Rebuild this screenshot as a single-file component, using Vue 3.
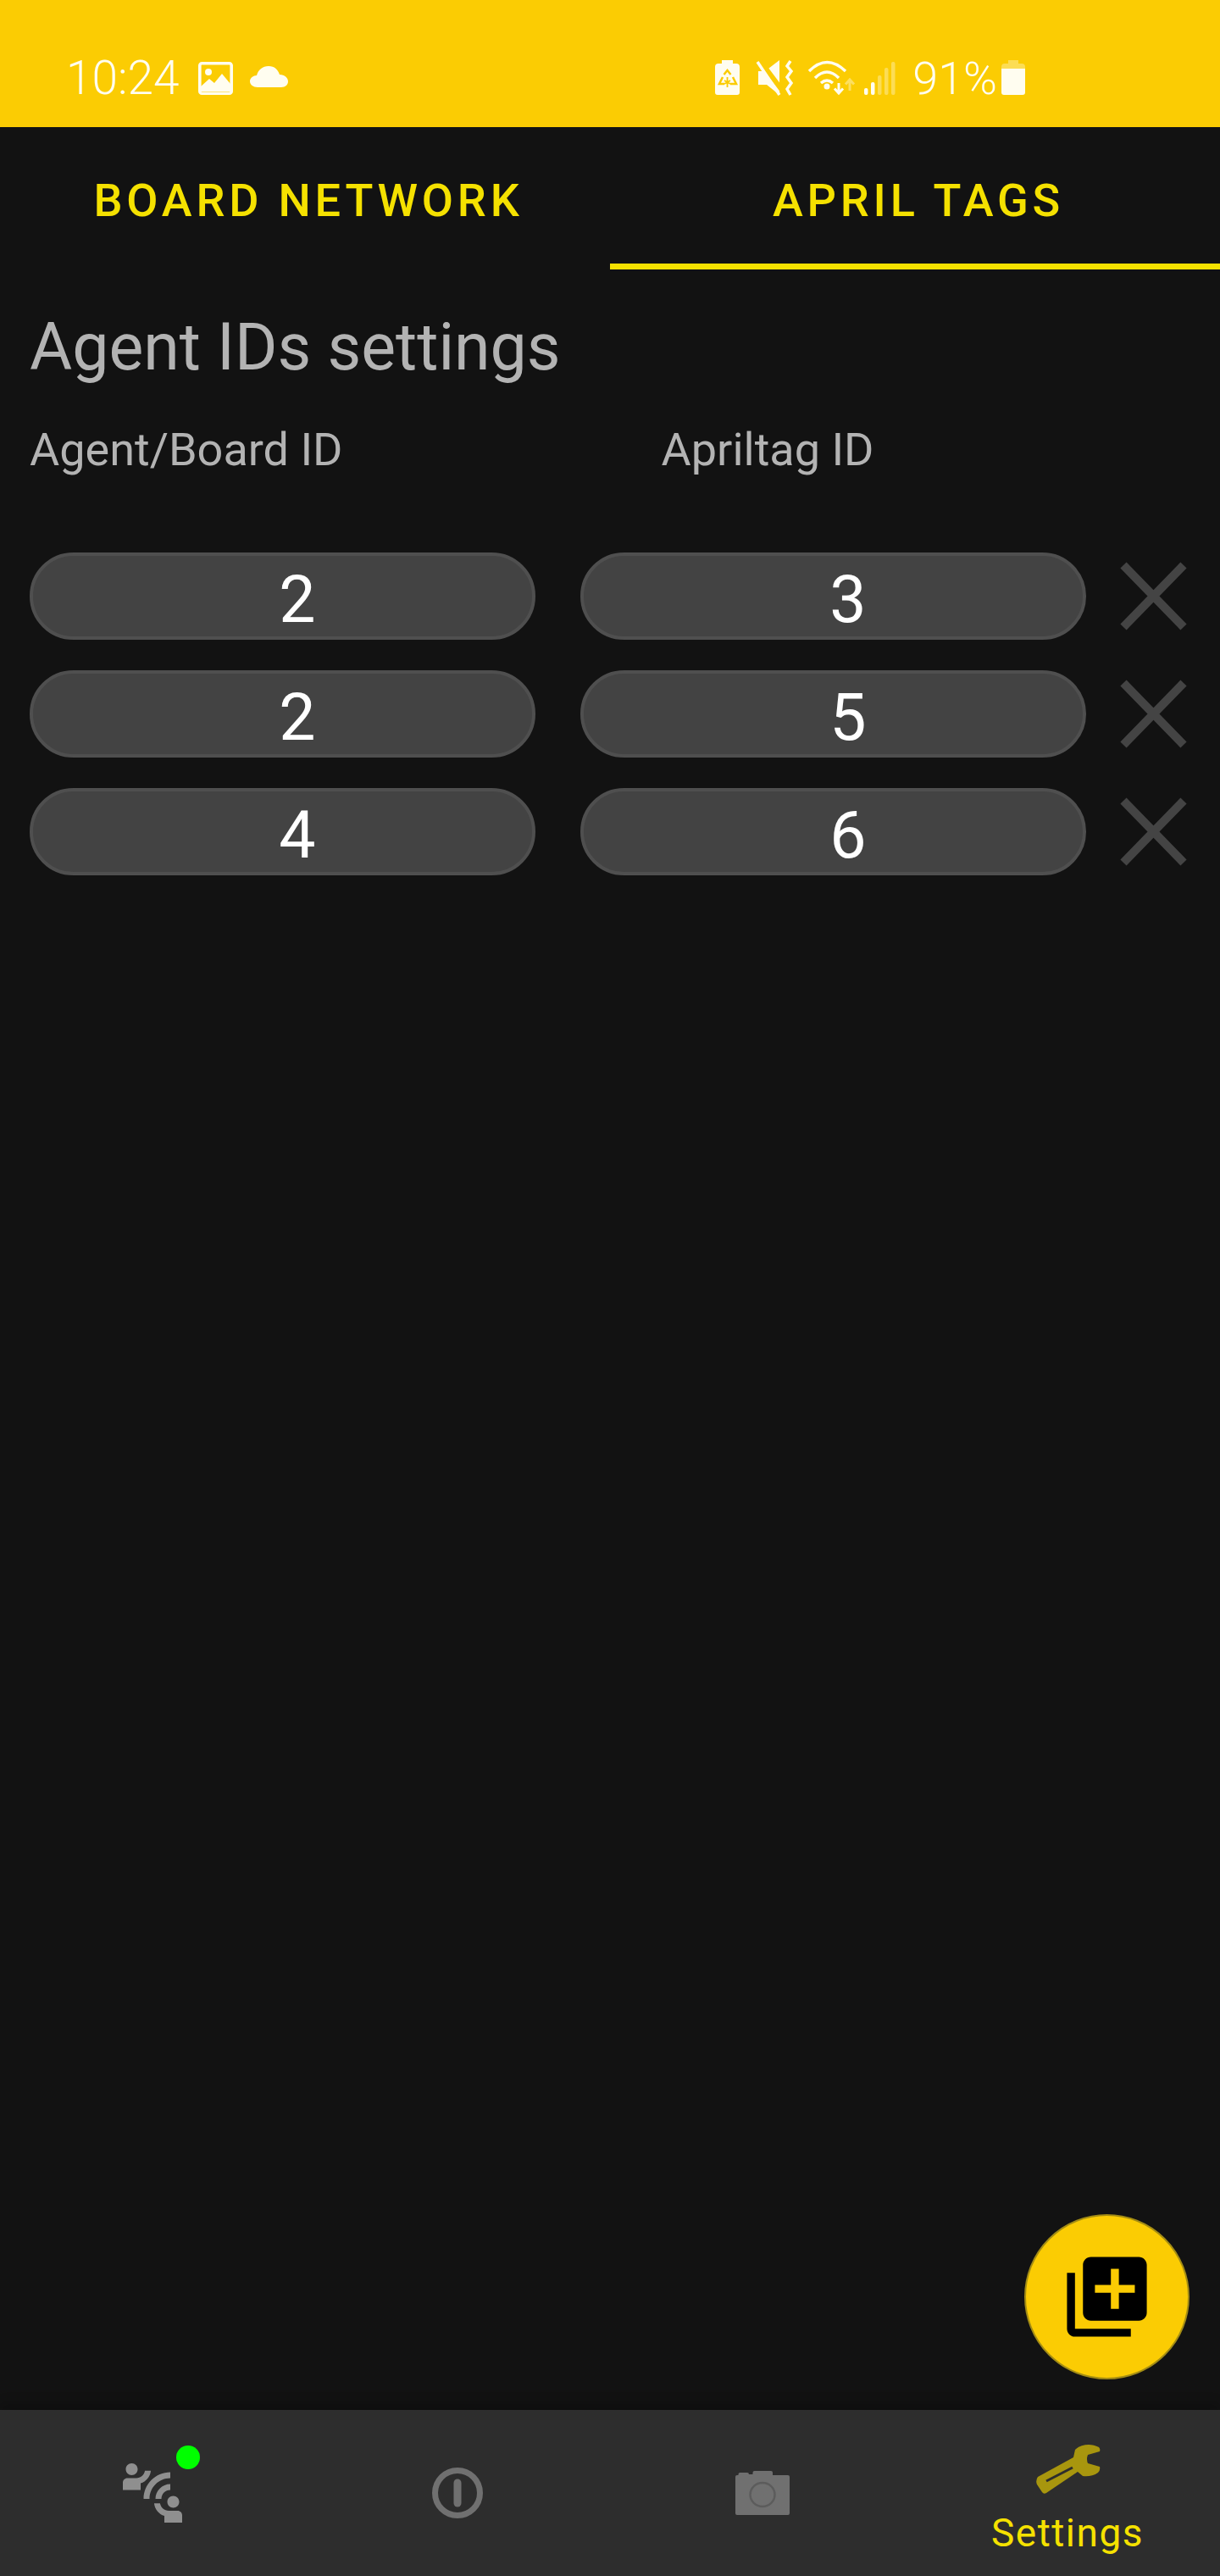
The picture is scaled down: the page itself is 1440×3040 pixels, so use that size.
<template>
  <div class="page">
    <header class="status">
      <span class="time">10:24</span>
      <svg class="ic-image" width="41" height="41" viewBox="0 0 41 41">
        <rect x="1.8" y="3.8" width="37.4" height="35.4" rx="2.5" fill="none" stroke="#fffdf0" stroke-width="3.6" />
        <circle cx="12" cy="14" r="4" fill="#fffdf0" />
        <path d="M3 37V31L13 22L19 27L28 16L38 28V37Z" fill="#fffdf0" />
      </svg>
      <svg class="ic-cloud" width="45" height="41" viewBox="0 0 45 41">
        <path d="M9 32C4 32 0 29 0 25C0 21 4 18 8 18C10 11 15 7 22 7C29 7 33 11 35 17C41 17 45 21 45 25C45 29 42 32 37 32Z" fill="#fffdf0" />
      </svg>

      <svg class="ic-recycle" width="29" height="41" viewBox="0 0 29 41">
        <path d="M8 0H21V4H25Q29 4 29 8V38Q29 41 26 41H3Q0 41 0 38V8Q0 4 4 4H8Z" fill="#fffdf0" />
        <g fill="none" stroke="#fbcc03" stroke-width="2.500">
          <path d="M10.500 17L14.500 12L18.500 17" />
          <path d="M21 20L25 28L18 28" />
          <path d="M11 28H5L9 20" />
          <path d="M14.500 20V32M11 24L18 28M18 24L11 28" stroke-width="1.800" />
        </g>
      </svg>
      <svg class="ic-mute" width="41" height="41" viewBox="0 0 41 41">
        <path d="M0 13H8L25 0V41L10 29H0Z" fill="#fffdf0" />
        <path d="M0 -2L30 38" stroke="#fbcc03" stroke-width="6" />
        <path d="M-1 2L25 41" stroke="#fffdf0" stroke-width="3.500" />
        <path d="M38 1L34 7L39 13L34 20L39 27L34 34L38 41" fill="none" stroke="#fffdf0" stroke-width="3.500" />
      </svg>
      <svg class="ic-wifi" width="58" height="41" viewBox="0 0 58 41">
        <g fill="none" stroke="#fffdf0" stroke-width="3.500">
          <path d="M2 13Q23 -8 45 13" />
          <path d="M9 21Q23 7 37 21" />
          <path d="M16 27Q23 21 30 27" />
        </g>
        <circle cx="23" cy="31" r="3.500" fill="#fffdf0" />
        <path d="M37 27V38M32 33.500L37 39L42 33.500" fill="none" stroke="#fffdf0" stroke-width="3" />
        <path d="M50 36V24M45 28.500L50 23L55 28.500" fill="none" stroke="#fffdf0" stroke-opacity=".4" stroke-width="3" />
      </svg>
      <svg class="ic-signal" width="38" height="41" viewBox="0 0 38 41">
        <rect x="0" y="33" width="4.500" height="8" rx="2" fill="#fffdf0" />
        <rect x="8" y="26" width="4.500" height="15" rx="2" fill="#fffdf0" />
        <rect x="16" y="18" width="4.500" height="23" rx="2" fill="#fffdf0" fill-opacity=".35" />
        <rect x="24" y="9" width="4.500" height="32" rx="2" fill="#fffdf0" fill-opacity=".35" />
        <rect x="32" y="2" width="4.500" height="39" rx="2" fill="#fffdf0" fill-opacity=".35" />
      </svg>
      <span class="percent">91%</span>
      <svg class="ic-battery" width="28" height="41" viewBox="0 0 28 41">
        <path d="M8 0H20V4H24Q28 4 28 8V10H0V8Q0 4 4 4H8Z" fill="#fffdf0" fill-opacity=".35" />
        <path d="M0 10H28V38Q28 41 25 41H3Q0 41 0 38Z" fill="#fffdf0" />
      </svg>
    </header>

    <nav class="tabs">
      <div class="tab">BOARD NETWORK</div>
      <div class="tab active">APRIL TAGS</div>
    </nav>

    <main class="content">
      <h1 class="title">Agent IDs settings</h1>
      <div class="labels">
        <span class="label">Agent/Board ID</span>
        <span class="label label-tag">Apriltag ID</span>
      </div>

      <div class="rows">
        <div class="row" v-for="(row, i) in rows" :key="i">
          <div class="pill">{{ row.agent }}</div>
          <div class="pill">{{ row.tag }}</div>
          <svg class="remove" width="77" height="77" viewBox="0 0 77 77">
            <path d="M3 2L74 75M74 2L3 75" fill="none" stroke="#444444" stroke-width="10" />
          </svg>
        </div>
      </div>

      <button class="fab">
        <svg width="113" height="113" viewBox="0 0 24 24">
          <path d="M4 6H2v14c0 1.100.9 2 2 2h14v-2H4V6zm16-4H8c-1.100 0-2 .9-2 2v12c0 1.100.9 2 2 2h12c1.100 0 2-.9 2-2V4c0-1.100-.9-2-2-2zm-1 9h-4v4h-2v-4H9V9h4V5h2v4h4v2z" fill="#000" />
        </svg>
      </button>
    </main>

    <footer class="bottom">
      <div class="item">
        <div class="icon-wrap">
          <svg width="84" height="84" viewBox="0 0 24 24">
            <path d="M11 14H9c0-4.970 4.030-9 9-9v2c-3.870 0-7 3.130-7 7zm7-3V9c-2.760 0-5 2.240-5 5h2c0-1.660 1.340-3 3-3zM7 4c0-1.110-.89-2-2-2s-2 .89-2 2 .89 2 2 2 2-.89 2-2zm4.450.5h-2C9.210 5.920 7.990 7 6.500 7h-3C2.670 7 2 7.670 2 8.500V11h6V8.740c1.860-.59 3.250-2.230 3.450-4.240zM19 17c1.110 0 2-.89 2-2s-.89-2-2-2-2 .89-2 2 .89 2 2 2zm1.500 1h-3c-1.490 0-2.710-1.080-2.950-2.500h-2c.2 2.010 1.590 3.650 3.450 4.240V22h6v-2.500c0-.83-.67-1.500-1.500-1.500z" fill="#8f8f8f" />
          </svg>
          <span class="dot"></span>
        </div>
      </div>
      <div class="item">
        <svg width="84" height="84" viewBox="0 0 84 84">
          <circle cx="42" cy="42" r="26.500" fill="none" stroke="#707070" stroke-width="7" />
          <path d="M42 30V54" stroke="#707070" stroke-width="9" stroke-linecap="round" />
        </svg>
      </div>
      <div class="item">
        <svg width="84" height="84" viewBox="0 0 84 84">
          <path d="M10 23Q10 21 12 21H13.500V20Q13.500 18 15.500 18H24Q26 18 26 20H30.500V18Q30.500 16 32.500 16H52Q54 16 54 18V21H72Q74 21 74 23V66Q74 68 72 68H12Q10 68 10 66Z" fill="#707070" />
          <ellipse cx="42" cy="44" rx="14.500" ry="14" fill="none" stroke="#5c5c5c" stroke-width="2.500" />
        </svg>
      </div>
      <div class="item active">
        <svg width="75" height="58" viewBox="0 0 75 58">
          <path d="M46 6C50 2 56 0 62 0C66 0 70 1 74 3Q76 5 75 8L61 12Q59 17 61 22L75 26Q76 30 73 33C68 37 60 38 55 37L49 32L12 57Q9 59 7 56L1 47Q-1 42 2 38L44 15Z" fill="#a8960e" />
          <path d="M12 43L43 27" stroke="#2d2d2d" stroke-width="3" />
        </svg>
        <span class="item-label">Settings</span>
      </div>
    </footer>
  </div>
</template>

<script setup>
const rows = [
  { agent: 2, tag: 3 },
  { agent: 2, tag: 5 },
  { agent: 4, tag: 6 },
];
</script>

<style>
html,
body {
  margin: 0;
  background: #121212;
}
</style>

<style scoped>
.page {
  display: flex;
  flex-direction: column;
  min-height: 3040px;
  background: #121212;
  font-family: Roboto, "Liberation Sans", sans-serif;
}

.status {
  display: flex;
  align-items: flex-start;
  box-sizing: border-box;
  height: 150px;
  padding: 71px 230px 0 78px;
  background: #fbcc03;
  color: #fffdf0;
}
.time,
.percent {
  font-size: 54px;
  font-weight: 300;
  line-height: 41px;
  padding-top: 1px;
}
.time {
  font-size: 55px;
}
.ic-image {
  margin-left: 22px;
}
.ic-cloud {
  margin-left: 20px;
}
.ic-recycle {
  margin-left: auto;
}
.ic-mute {
  margin-left: 22px;
}
.ic-wifi {
  margin-left: 17px;
}
.ic-signal {
  margin-left: 9px;
}
.percent {
  margin-left: 19px;
}
.ic-battery {
  margin-left: 5px;
}

.tabs {
  display: grid;
  grid-template-columns: 1fr 1fr;
}
.tab {
  box-sizing: border-box;
  height: 168px;
  padding: 56px 0 0 8px;
  border-bottom: 7px solid transparent;
  color: #f5e100;
  font-size: 54px;
  font-weight: 500;
  line-height: 62px;
  letter-spacing: 4.800px;
  text-align: center;
}
.tab.active {
  border-bottom-color: #f5e100;
}

.content {
  position: relative;
  flex: 1;
  padding: 0 35px;
}
.title {
  margin: 48px 0 0;
  color: #b3b3b3;
  font-size: 77px;
  font-weight: 400;
  line-height: 88px;
}
.labels {
  display: flex;
  margin-top: 46px;
}
.label {
  color: #b3b3b3;
  font-size: 54px;
  line-height: 62px;
}
.label-tag {
  margin-left: 376px;
}

.rows {
  display: flex;
  flex-direction: column;
  gap: 36px;
  margin-top: 90px;
}
.row {
  display: flex;
  align-items: center;
}
.pill {
  box-sizing: border-box;
  width: 597px;
  height: 103px;
  padding: 10px 0 0 35px;
  border: 4px solid #4f4f4f;
  border-radius: 52px;
  background: #434343;
  color: #fff;
  font-size: 77px;
  line-height: 85px;
  text-align: center;
}
.pill + .pill {
  margin-left: 53px;
}
.remove {
  margin-left: 41px;
}

.fab {
  position: absolute;
  right: 36px;
  bottom: 36px;
  display: flex;
  align-items: center;
  justify-content: center;
  box-sizing: border-box;
  width: 195px;
  height: 195px;
  padding: 0;
  border: 2px solid #a38c14;
  border-radius: 50%;
  background: #fbcc03;
}

.bottom {
  display: flex;
  height: 196px;
  background: #2d2d2d;
  box-shadow: 0 -8px 12px rgba(0, 0, 0, 0.2);
}
.item {
  display: flex;
  flex: 1;
  flex-direction: column;
  align-items: center;
  box-sizing: border-box;
  padding-top: 56px;
}
.item.active {
  padding-top: 41px;
}
.icon-wrap {
  position: relative;
  width: 84px;
  height: 84px;
}
.dot {
  position: absolute;
  left: 70px;
  top: -14px;
  width: 28px;
  height: 28px;
  border-radius: 50%;
  background: #00ff00;
}
.item-label {
  margin-top: 24px;
  color: #f5e100;
  font-size: 46px;
  line-height: 45px;
  letter-spacing: 1.500px;
}
svg {
  display: block;
  flex: none;
  overflow: visible;
}
</style>
